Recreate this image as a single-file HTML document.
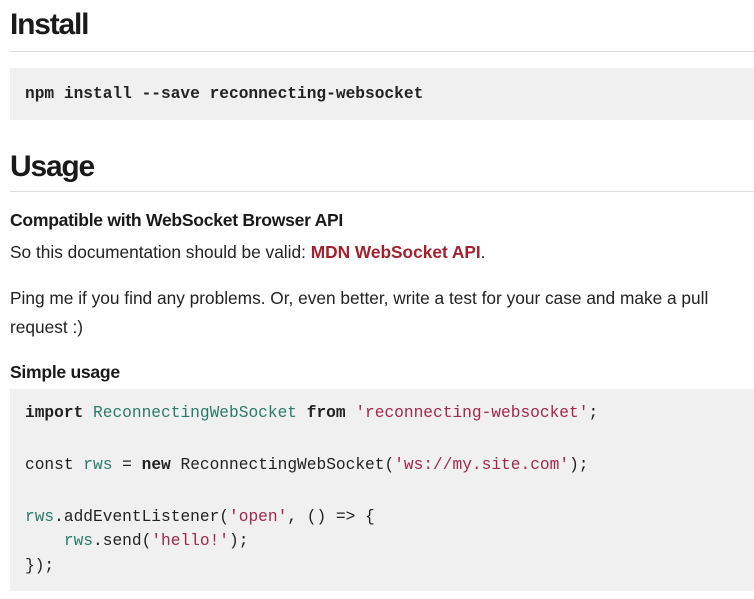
<!DOCTYPE html>
<html><head><style>
body{margin:0;width:754px;height:599px;overflow:hidden;background:#fff;font-family:"Liberation Sans",sans-serif;color:#1a1a1a;position:relative}
.a{position:absolute;left:10px;white-space:nowrap}
h1{margin:0;font-size:30px;font-weight:bold;letter-spacing:-1.2px}
.hr{position:absolute;left:10px;right:0;height:1px;background:#ddd}
.box{position:absolute;left:10px;right:0;background:#f0f0f0}
.m{font-family:"Liberation Mono",monospace;font-size:16.2px;color:#222;white-space:pre;position:absolute;left:25px}
.g{color:#2a7a6a}.r{color:#a0284a}.b{font-weight:bold}
.p{font-size:17.3px;color:#222}
.hb{font-size:17.6px;font-weight:bold;letter-spacing:-0.3px}
</style></head><body>
<h1 class="a" style="top:8px">Install</h1>
<div class="hr" style="top:51px"></div>
<div class="box" style="top:68px;height:52px"></div>
<div class="m b" style="top:85px">npm install --save reconnecting-websocket</div>
<h1 class="a" style="top:150px">Usage</h1>
<div class="hr" style="top:191px"></div>
<div class="a hb" style="top:210px">Compatible with WebSocket Browser API</div>
<div class="a p" style="top:242px">So this documentation should be valid: <span class="b" style="color:#a3202e">MDN WebSocket API</span>.</div>
<div class="a p" style="top:288px">Ping me if you find any problems. Or, even better, write a test for your case and make a pull</div>
<div class="a p" style="top:317px">request :)</div>
<div class="a hb" style="top:362px">Simple usage</div>
<div class="box" style="top:389px;height:202px"></div>
<div class="m" style="top:404px"><span class="b">import</span> <span class="g">ReconnectingWebSocket</span> <span class="b">from</span> <span class="r">'reconnecting-websocket'</span>;</div>
<div class="m" style="top:456px">const <span class="g">rws</span> = <span class="b">new</span> ReconnectingWebSocket(<span class="r">'ws://my.site.com'</span>);</div>
<div class="m" style="top:508px"><span class="g">rws</span>.addEventListener(<span class="r">'open'</span>, () =&gt; {</div>
<div class="m" style="top:532px">    <span class="g">rws</span>.send(<span class="r">'hello!'</span>);</div>
<div class="m" style="top:557px">});</div>
</body></html>
